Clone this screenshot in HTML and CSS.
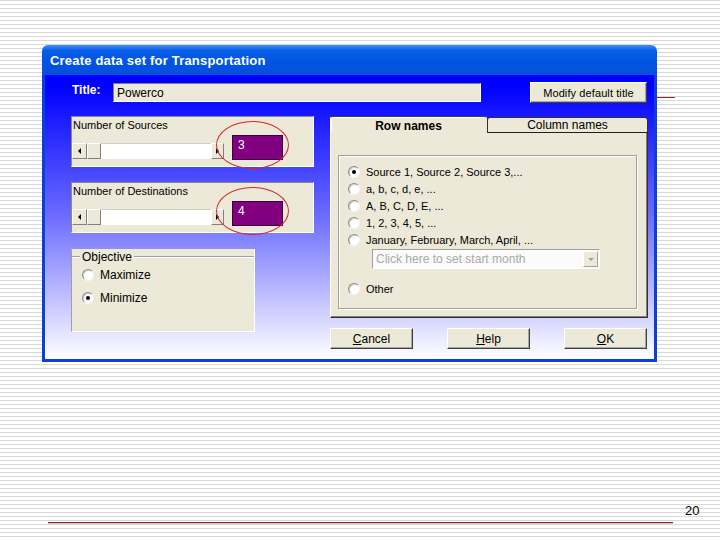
FILE: index.html
```html
<!DOCTYPE html>
<html lang="en">
<head>
    <meta charset="UTF-8">
    <meta name="viewport" content="width=device-width, initial-scale=1.0">
    <title>Transportation</title>
    <link rel="stylesheet" href="styles.css">
</head>
<body>
    <div class="slide">
        <div class="top-rule"></div>
        <div class="dialog">
            <div class="titlebar">Create data set for Transportation</div>
            <div class="client">
                <div class="title-row">
                    <span class="title-label">Title:</span>
                    <div class="textbox">Powerco</div>
                    <button class="btn btn-modify">Modify default title</button>
                </div>
                <div class="main">
                    <div class="left-col">
                        <div class="count-panel">
                            <div class="panel-label">Number of Sources</div>
                            <div class="panel-row">
                                <div class="scrollbar">
                                    <span class="sb-btn"><span class="arrow-left"></span></span>
                                    <span class="sb-thumb"></span>
                                    <span class="sb-track"></span>
                                    <span class="sb-btn sb-btn-right"><span class="arrow-right"></span></span>
                                </div>
                                <div class="value-box">3<span class="ring"></span></div>
                            </div>
                        </div>
                        <div class="count-panel">
                            <div class="panel-label">Number of Destinations</div>
                            <div class="panel-row">
                                <div class="scrollbar">
                                    <span class="sb-btn"><span class="arrow-left"></span></span>
                                    <span class="sb-thumb"></span>
                                    <span class="sb-track"></span>
                                    <span class="sb-btn sb-btn-right"><span class="arrow-right"></span></span>
                                </div>
                                <div class="value-box">4<span class="ring"></span></div>
                            </div>
                        </div>
                        <div class="objective">
                            <div class="obj-head">
                                <span class="etch etch-short"></span>
                                <span class="obj-legend">Objective</span>
                                <span class="etch"></span>
                            </div>
                            <div class="obj-option"><span class="radio"></span>Maximize</div>
                            <div class="obj-option obj-option-2"><span class="radio checked"></span>Minimize</div>
                        </div>
                    </div>
                    <div class="right-col">
                        <div class="tabs">
                            <div class="tab tab-active">Row names</div>
                            <div class="tab">Column names</div>
                        </div>
                        <div class="tab-panel">
                            <div class="names-group">
                                <div class="name-option"><span class="radio checked"></span>Source 1, Source 2, Source 3,...</div>
                                <div class="name-option"><span class="radio"></span>a, b, c, d, e, ...</div>
                                <div class="name-option"><span class="radio"></span>A, B, C, D, E, ...</div>
                                <div class="name-option"><span class="radio"></span>1, 2, 3, 4, 5, ...</div>
                                <div class="name-option"><span class="radio"></span>January, February, March, April, ...</div>
                                <div class="combo">
                                    <span class="combo-text">Click here to set start month</span>
                                    <span class="combo-btn"><span class="arrow-down"></span></span>
                                </div>
                                <div class="name-option name-other"><span class="radio"></span>Other</div>
                            </div>
                        </div>
                        <div class="button-row">
                            <button class="btn btn-main"><u>C</u>ancel</button>
                            <button class="btn btn-main"><u>H</u>elp</button>
                            <button class="btn btn-main"><u>O</u>K</button>
                        </div>
                    </div>
                </div>
            </div>
        </div>
        <div class="footer">
            <div class="footer-line"></div>
            <div class="page-num">20</div>
        </div>
    </div>
</body>
</html>
```

FILE: styles.css
```css
* {
    box-sizing: border-box;
    margin: 0;
    padding: 0;
}
body {
    width: 720px;
    height: 540px;
    overflow: hidden;
    font-family: "Liberation Sans", Arial, sans-serif;
}
.slide {
    position: relative;
    width: 720px;
    height: 540px;
    display: flex;
    flex-direction: column;
    background: repeating-linear-gradient(to bottom, #d9d9d9 0px, #d9d9d9 1px, #ffffff 1px, #ffffff 4px);
}
.top-rule {
    position: absolute;
    left: 48px;
    top: 97px;
    width: 627px;
    height: 1px;
    background: #8c2a2a;
}
.dialog {
    position: relative;
    width: 615px;
    height: 317px;
    margin: 45px 0 0 42px;
    display: flex;
    flex-direction: column;
}
.titlebar {
    height: 30px;
    padding: 2px 0 0 8px;
    line-height: 28px;
    border-radius: 6px 6px 0 0;
    background: linear-gradient(to bottom, #3d8df7 0%, #0a5fe8 18%, #0054e3 60%, #0a4fd8 100%);
    color: #ffffff;
    font-weight: bold;
    font-size: 13px;
    letter-spacing: 0.2px;
}
.client {
    flex: 1;
    border: 3px solid #0b3fd6;
    border-top: none;
    background: linear-gradient(to bottom, #0000ff 4%, #6d6dff 50%, #ffffff 100%);
    font-size: 11px;
}
.title-row {
    display: flex;
    align-items: flex-start;
    margin-top: 7px;
    padding-left: 27px;
}
.title-label {
    width: 41px;
    color: #ffffff;
    font-weight: bold;
    font-size: 12px;
    line-height: 16px;
}
.textbox {
    width: 368px;
    height: 19px;
    margin-top: 1px;
    padding: 2px 3px;
    background: #ece9d8;
    border: 1px solid;
    border-color: #808080 #ffffff #ffffff #808080;
    font-size: 12px;
    line-height: 14px;
}
.btn {
    background: #ece9d8;
    border: 1px solid;
    border-color: #ffffff #404040 #404040 #ffffff;
    box-shadow: inset -1px -1px 0 #aca899;
    font-family: "Liberation Sans", Arial, sans-serif;
    color: #000000;
    cursor: pointer;
}
.btn-modify {
    width: 117px;
    height: 21px;
    margin-left: 49px;
    font-size: 11px;
    letter-spacing: 0.1px;
}
.main {
    display: flex;
    margin-top: 13px;
}
.left-col {
    width: 243px;
    margin-left: 26px;
    display: flex;
    flex-direction: column;
}
.count-panel {
    height: 51px;
    margin-bottom: 15px;
    background: #ece9d8;
    border: 1px solid;
    border-color: #8a8a8a #ffffff #ffffff #8a8a8a;
}
.panel-label {
    padding: 2px 0 0 1px;
    line-height: 13px;
    font-size: 11px;
}
.panel-row {
    display: flex;
    margin-top: 3px;
}
.scrollbar {
    display: flex;
    width: 152px;
    height: 16px;
    margin-top: 8px;
}
.sb-btn, .sb-thumb {
    display: flex;
    align-items: center;
    justify-content: center;
    width: 15px;
    background: #ece9d8;
    border: 1px solid;
    border-color: #ffffff #808080 #808080 #ffffff;
}
.sb-thumb {
    width: 14px;
}
.sb-btn-right {
    width: 13px;
}
.sb-track {
    flex: 1;
    background: #ffffff;
    border-top: 1px solid #d4d0c8;
}
.arrow-left {
    width: 0;
    height: 0;
    border-top: 3px solid transparent;
    border-bottom: 3px solid transparent;
    border-right: 3px solid #000000;
}
.arrow-right {
    width: 0;
    height: 0;
    border-top: 3px solid transparent;
    border-bottom: 3px solid transparent;
    border-left: 3px solid #000000;
}
.value-box {
    position: relative;
    width: 51px;
    height: 25px;
    margin-left: 8px;
    padding: 2px 0 0 5px;
    background: #800080;
    border: 1px solid #3a003a;
    color: #ffffff;
    font-size: 12px;
    line-height: 14px;
}
.ring {
    position: absolute;
    left: -17px;
    top: -15px;
    width: 73px;
    height: 48px;
    border: 1px solid #d42a2a;
    border-radius: 50%;
}
.objective {
    width: 184px;
    height: 83px;
    margin-top: 1px;
    background: #ece9d8;
    border: 1px solid;
    border-color: #ece9d8 #ffffff #ffffff #a0a0a0;
}
.obj-head {
    display: flex;
    align-items: center;
    height: 14px;
}
.etch {
    flex: 1;
    height: 2px;
    border-top: 1px solid #a0a0a0;
    border-bottom: 1px solid #ffffff;
}
.etch-short {
    flex: none;
    width: 8px;
}
.obj-legend {
    padding: 0 2px;
    font-size: 12px;
    line-height: 14px;
}
.obj-option {
    display: flex;
    align-items: center;
    height: 16px;
    margin-top: 3px;
    padding-left: 10px;
    font-size: 12px;
}
.obj-option-2 {
    margin-top: 7px;
}
.radio {
    display: flex;
    align-items: center;
    justify-content: center;
    width: 12px;
    height: 12px;
    margin-right: 6px;
    border-radius: 50%;
    background: #ffffff;
    border: 1px solid;
    border-color: #8c8c8c #f4f4f4 #f4f4f4 #8c8c8c;
    box-shadow: inset 1px 1px 0 #d4d0c8;
}
.radio.checked::after {
    content: "";
    width: 4px;
    height: 4px;
    border-radius: 50%;
    background: #000000;
}
.right-col {
    width: 318px;
    margin-left: 16px;
    display: flex;
    flex-direction: column;
}
.tabs {
    display: flex;
    height: 17px;
}
.tab {
    width: 161px;
    margin-top: 1px;
    background: #ece9d8;
    border: 1px solid #303030;
    border-bottom: 1px solid #202020;
    border-radius: 3px 3px 0 0;
    text-align: center;
    font-size: 12px;
    line-height: 14px;
}
.tab-active {
    width: 157px;
    margin-top: 0;
    border-color: #606060 #ece9d8 #ece9d8 #ffffff;
    border-top: 1px solid #404040;
    box-shadow: inset 1px 1px 0 #ffffff;
    font-weight: bold;
    line-height: 18px;
}
.tab-panel {
    height: 185px;
    background: #ece9d8;
    border-left: 1px solid #ffffff;
    border-right: 1px solid #303030;
    border-bottom: 1px solid #303030;
    box-shadow: inset -1px -1px 0 #808080;
    padding: 22px 0 0 7px;
}
.names-group {
    width: 299px;
    height: 154px;
    padding: 7px 0 0 9px;
    border: 1px solid #a0a0a0;
    box-shadow: inset 1px 1px 0 #ffffff, 1px 1px 0 #ffffff;
}
.name-option {
    display: flex;
    align-items: center;
    height: 17px;
    font-size: 11px;
}
.name-other {
    margin-top: 11px;
}
.combo {
    display: flex;
    align-items: center;
    width: 228px;
    height: 20px;
    margin: 1px 0 0 24px;
    background: #fbfbfb;
    border: 1px solid;
    border-color: #a0a0a0 #ffffff #ffffff #a0a0a0;
}
.combo-text {
    flex: 1;
    padding-left: 3px;
    color: #a8a8a8;
    font-size: 12px;
}
.combo-btn {
    display: flex;
    align-items: center;
    justify-content: center;
    width: 15px;
    height: 16px;
    margin-right: 1px;
    background: #ece9d8;
    border: 1px solid;
    border-color: #ffffff #a0a0a0 #a0a0a0 #ffffff;
}
.arrow-down {
    width: 0;
    height: 0;
    border-left: 3px solid transparent;
    border-right: 3px solid transparent;
    border-top: 3px solid #a0a0a0;
}
.button-row {
    display: flex;
    justify-content: space-between;
    width: 317px;
    margin-top: 10px;
}
.btn-main {
    width: 83px;
    height: 21px;
    font-size: 12px;
}
.footer {
    display: flex;
    align-items: flex-start;
    margin-top: auto;
    padding: 0 0 16px 48px;
}
.footer-line {
    width: 625px;
    height: 2px;
    margin-top: 18px;
    border-top: 1px solid #8c2a2a;
    border-bottom: 1px solid #e6b8b8;
}
.page-num {
    margin-left: 12px;
    font-size: 13px;
    line-height: 14px;
}
```
